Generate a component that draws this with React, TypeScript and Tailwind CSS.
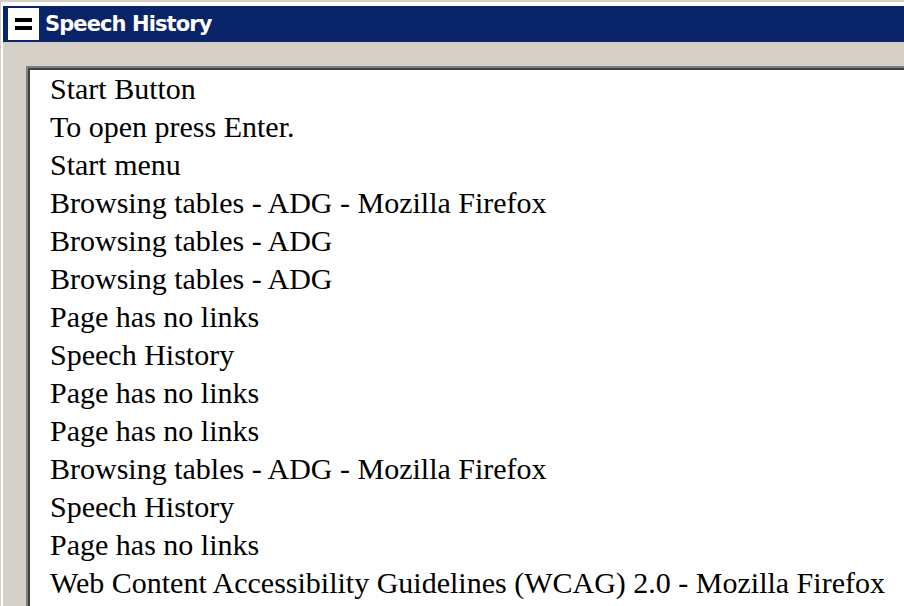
import React from 'react'

const lines = [
  'Start Button',
  'To open press Enter.',
  'Start menu',
  'Browsing tables - ADG - Mozilla Firefox',
  'Browsing tables - ADG',
  'Browsing tables - ADG',
  'Page has no links',
  'Speech History',
  'Page has no links',
  'Page has no links',
  'Browsing tables - ADG - Mozilla Firefox',
  'Speech History',
  'Page has no links',
  'Web Content Accessibility Guidelines (WCAG) 2.0 - Mozilla Firefox',
]

export default function App() {
  return (
    <div className="w-[904px] h-[606px] overflow-hidden bg-[#d4d0c8] pt-[2px] pl-[1px]">
      {/* window frame highlight */}
      <div className="border-t-[4px] border-l-[2px] border-white">
        {/* title bar */}
        <div className="h-[36px] bg-[#0a246a] flex items-center pl-[5px]">
          <div className="w-[31px] h-[32px] bg-white flex flex-col items-center justify-center gap-[4px]">
            <div className="w-[17px] h-[4px] bg-black" />
            <div className="w-[17px] h-[4px] bg-black" />
          </div>
          <span className="ml-[6px] text-white font-bold text-[21px] leading-none tracking-[-0.9px] font-['DejaVu_Sans',Verdana,sans-serif]">
            Speech History
          </span>
        </div>

        {/* list area */}
        <div className="pt-[24px] pl-[23px]">
          <div className="border-t-2 border-l-2 border-[#808080]">
            <div className="border-t-2 border-l-2 border-[#404040] bg-white h-[560px] pl-[20px]">
              <ul className="text-black text-[30px] leading-[38px] whitespace-nowrap font-['Liberation_Serif','Times_New_Roman',serif]">
                {lines.map((line, i) => (
                  <li key={i}>{line}</li>
                ))}
              </ul>
            </div>
          </div>
        </div>
      </div>
    </div>
  )
}
